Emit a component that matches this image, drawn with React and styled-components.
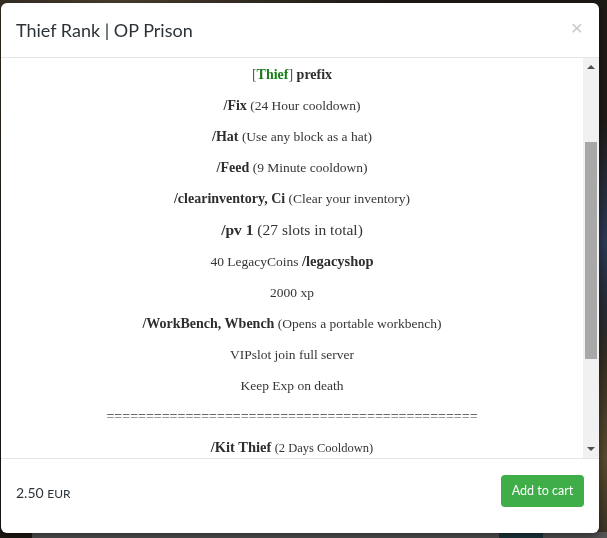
import React, { useCallback, useEffect, useRef, useState } from "react";
import styled, { createGlobalStyle } from "styled-components";

const Global = createGlobalStyle`
  html, body { margin: 0; padding: 0; }
  body {
    width: 607px; height: 538px; overflow: hidden;
    background: #1c1914;
    font-family: Lato, "Open Sans", sans-serif;
  }
`;

const Backdrop = styled.div`
  position: fixed; inset: 0;
  background:
    radial-gradient(ellipse at 20% 0%, #4a3f30 0%, transparent 40%),
    radial-gradient(ellipse at 100% 45%, #2c3a55 0%, transparent 30%),
    radial-gradient(ellipse at 100% 85%, #5a4a30 0%, transparent 25%),
    #1e1a15;
`;

const BehindBar = styled.div`
  position: fixed; left: 32px; right: 0; bottom: 0; height: 6px;
  display: flex;
  background: #555;
`;
const BehindTeal = styled.div`
  margin-left: auto; margin-right: 64px; width: 44px; background: #1f3a40;
`;

const Modal = styled.div`
  position: fixed; left: 1px; top: 3px;
  width: 598px; height: 530px;
  background: #fff;
  border-radius: 6px;
  display: flex; flex-direction: column;
  overflow: hidden;
  box-shadow: 0 3px 9px rgba(0,0,0,.5);
`;

const Header = styled.div`
  height: 55px; flex: none;
  border-bottom: 1px solid #e5e5e5;
  display: flex; align-items: center; justify-content: space-between;
  padding: 0 16px 0 15px;
  box-sizing: border-box;
`;

const Title = styled.h4`
  margin: 0;
  font-family: Lato, sans-serif; font-weight: 400;
  font-size: 18px; color: #2c3338;
`;

const Close = styled.button`
  border: 0; background: none; padding: 0; cursor: pointer;
  font-family: "Liberation Sans", Arial, sans-serif;
  font-size: 21px; line-height: 1; color: #c8c8c8; font-weight: 400;
  margin-top: -6px;
`;

const BodyRow = styled.div`
  flex: 1; min-height: 0;
  display: flex;
`;

const Scroller = styled.div`
  flex: 1; min-width: 0;
  overflow-y: scroll;
  scrollbar-width: none;
  &::-webkit-scrollbar { display: none; }
`;

const Content = styled.div`
  font-family: Georgia, "Liberation Serif", serif;
  color: #363636;
  text-align: center;
  display: flex; flex-direction: column; gap: 10px;
  padding: 6px 0 151px;
`;

const PackageImage = styled.div`
  height: 114px; flex: none;
`;

const Line = styled.p`
  margin: 0; flex: none;
  height: 21.1px;
  line-height: 21px;
  font-size: ${(p) => p.$size || 13.5}px;
  white-space: nowrap;
`;

const B = styled.strong`
  font-weight: 700; color: #2e2e2e;
  font-size: ${(p) => (p.$size ? `${p.$size}px` : "inherit")};
`;

const Small = styled.span`
  font-size: ${(p) => p.$size || 12}px;
`;

const Bracket = styled.span`
  color: #555;
`;
const Green = styled.span`
  color: #1a7d1a; font-weight: 700;
`;

const Rail = styled.div`
  width: 16px; flex: none;
  background: #f1f1f1;
  display: flex; flex-direction: column;
`;

const ArrowBtn = styled.div`
  height: 17px; flex: none;
  display: flex; align-items: center; justify-content: center;
`;

const Track = styled.div`
  flex: 1; position: relative;
`;

const Thumb = styled.div`
  position: absolute; left: 2px; right: 2px;
  background: #a8a8a8;
`;

const Footer = styled.div`
  height: 75px; flex: none;
  border-top: 1px solid #e5e5e5;
  display: flex; align-items: center; justify-content: space-between;
  padding: 0 15px 0 15px;
  box-sizing: border-box;
`;

const Price = styled.div`
  font-family: Lato, sans-serif; font-size: 14px; color: #2c3338;
  margin-top: -7px;
`;
const Currency = styled.span`
  font-size: 12px;
`;

const CartButton = styled.button`
  border: 0; border-radius: 4px;
  background: #3fae49; color: #fff;
  font-family: Lato, sans-serif; font-size: 12.5px;
  width: 83px; height: 32px;
  padding: 0; cursor: pointer;
  margin-top: -11px;
`;

const Arrow = ({ up }) => (
  <svg width="8" height="5" viewBox="0 0 8 5">
    <path d={up ? "M0 5 L4 1 L8 5 Z" : "M0 0 L4 4 L8 0 Z"} fill="#505050" />
  </svg>
);

export default function App() {
  const scrollRef = useRef(null);
  const trackRef = useRef(null);
  const [thumb, setThumb] = useState({ top: 0, height: 0 });

  const update = useCallback(() => {
    const el = scrollRef.current;
    const tr = trackRef.current;
    if (!el || !tr) return;
    const trackH = tr.clientHeight;
    const h = (trackH * el.clientHeight) / el.scrollHeight;
    const max = el.scrollHeight - el.clientHeight;
    const top = max > 0 ? ((trackH - h) * el.scrollTop) / max : 0;
    setThumb({ top, height: h });
  }, []);

  useEffect(() => {
    if (scrollRef.current) scrollRef.current.scrollTop = 124;
    update();
  }, [update]);

  return (
    <>
      <Global />
      <Backdrop />
      <BehindBar>
        <BehindTeal />
      </BehindBar>
      <Modal>
        <Header>
          <Title>Thief Rank | OP Prison</Title>
          <Close aria-label="Close">×</Close>
        </Header>
        <BodyRow>
          <Scroller ref={scrollRef} onScroll={update}>
            <Content>
              <PackageImage />
              <Line $size={14}>
                <Bracket>[</Bracket><Green>Thief</Green><Bracket>]</Bracket> <B>prefix</B>
              </Line>
              <Line><B $size={14}>/Fix</B> (24 Hour cooldown)</Line>
              <Line><B $size={14}>/Hat</B> (Use any block as a hat)</Line>
              <Line><B $size={14}>/Feed</B> (9 Minute cooldown)</Line>
              <Line><B $size={14}>/clearinventory, Ci</B> (Clear your inventory)</Line>
              <Line $size={15.5}><B>/pv 1</B> (27 slots in total)</Line>
              <Line>40 LegacyCoins <B $size={14.5}>/legacyshop</B></Line>
              <Line>2000 xp</Line>
              <Line><B $size={14}>/WorkBench, Wbench</B> (Opens a portable workbench)</Line>
              <Line>VIPslot join full server</Line>
              <Line>Keep Exp on death</Line>
              <Line $size={14}>===============================================</Line>
              <Line><B $size={14.5}>/Kit Thief</B> <Small $size={12.5}>(2 Days Cooldown)</Small></Line>
            </Content>
          </Scroller>
          <Rail>
            <ArrowBtn><Arrow up /></ArrowBtn>
            <Track ref={trackRef}>
              <Thumb style={{ top: thumb.top, height: thumb.height }} />
            </Track>
            <ArrowBtn><Arrow /></ArrowBtn>
          </Rail>
        </BodyRow>
        <Footer>
          <Price>2.50 <Currency>EUR</Currency></Price>
          <CartButton>Add to cart</CartButton>
        </Footer>
      </Modal>
    </>
  );
}
